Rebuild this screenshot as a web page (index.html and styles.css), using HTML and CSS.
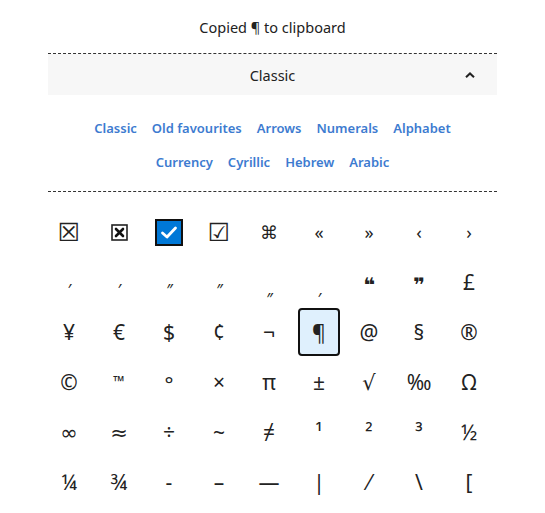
FILE: index.html
```html
<!DOCTYPE html>
<html lang="en">
<head>
<meta charset="utf-8">
<title>Symbols</title>
<link rel="stylesheet" href="styles.css">
</head>
<body>
<main class="page">
  <p class="status">Copied ¶ to clipboard</p>
  <hr class="divider">
  <div class="section-head">
    <span class="section-title">Classic</span>
    <svg class="chevron" width="10" height="6" viewBox="0 0 10 6"><path d="M1 5.2 L5 1.4 L9 5.2" fill="none" stroke="#222" stroke-width="2"/></svg>
  </div>
  <nav class="links">
    <a href="#">Classic</a>
    <a href="#">Old favourites</a>
    <a href="#">Arrows</a>
    <a href="#">Numerals</a>
    <a href="#">Alphabet</a>
    <a href="#">Currency</a>
    <a href="#">Cyrillic</a>
    <a href="#">Hebrew</a>
    <a href="#">Arabic</a>
  </nav>
  <hr class="divider">
  <div class="grid">
    <button class="cell"><span class="sym box">☒</span></button>
    <button class="cell"><svg class="boxicon" width="17" height="17" viewBox="0 0 17 17"><rect x="1" y="1" width="15" height="15" fill="#fff" stroke="#222" stroke-width="1.6"/><path d="M5 5 L12 12 M12 5 L5 12" stroke="#111" stroke-width="2.6" stroke-linecap="round"/></svg></button>
    <button class="cell"><svg class="emoji" width="28" height="27" viewBox="0 0 28 27"><rect x="1" y="1" width="26" height="25" fill="#0078d7" stroke="#111" stroke-width="2"/><path d="M7.5 14 L12 18 L20.5 9" fill="none" stroke="#fff" stroke-width="2.8" stroke-linecap="round" stroke-linejoin="round"/></svg></button>
    <button class="cell"><span class="sym box">☑</span></button>
    <button class="cell"><span class="sym small">⌘</span></button>
    <button class="cell"><span class="sym small">«</span></button>
    <button class="cell"><span class="sym small">»</span></button>
    <button class="cell"><span class="sym small">‹</span></button>
    <button class="cell"><span class="sym small">›</span></button>

    <button class="cell"><span class="sym tick">′</span></button>
    <button class="cell"><span class="sym tick">′</span></button>
    <button class="cell"><span class="sym tick">″</span></button>
    <button class="cell"><span class="sym tick">″</span></button>
    <button class="cell"><span class="sym tick low">″</span></button>
    <button class="cell"><span class="sym tick low">′</span></button>
    <button class="cell"><span class="sym orn">❝</span></button>
    <button class="cell"><span class="sym orn">❞</span></button>
    <button class="cell"><span class="sym">£</span></button>

    <button class="cell"><span class="sym">¥</span></button>
    <button class="cell"><span class="sym">€</span></button>
    <button class="cell"><span class="sym">$</span></button>
    <button class="cell"><span class="sym">¢</span></button>
    <button class="cell"><span class="sym">¬</span></button>
    <button class="cell selected"><span class="sym">¶</span></button>
    <button class="cell"><span class="sym">@</span></button>
    <button class="cell"><span class="sym">§</span></button>
    <button class="cell"><span class="sym">®</span></button>

    <button class="cell"><span class="sym">©</span></button>
    <button class="cell"><span class="sym tm">™</span></button>
    <button class="cell"><span class="sym deg">°</span></button>
    <button class="cell"><span class="sym">×</span></button>
    <button class="cell"><span class="sym">π</span></button>
    <button class="cell"><span class="sym">±</span></button>
    <button class="cell"><span class="sym">√</span></button>
    <button class="cell"><span class="sym">‰</span></button>
    <button class="cell"><span class="sym">Ω</span></button>

    <button class="cell"><span class="sym">∞</span></button>
    <button class="cell"><span class="sym">≈</span></button>
    <button class="cell"><span class="sym">÷</span></button>
    <button class="cell"><span class="sym">~</span></button>
    <button class="cell"><span class="sym">≠</span></button>
    <button class="cell"><span class="sym sup">¹</span></button>
    <button class="cell"><span class="sym sup">²</span></button>
    <button class="cell"><span class="sym sup">³</span></button>
    <button class="cell"><span class="sym">½</span></button>

    <button class="cell"><span class="sym">¼</span></button>
    <button class="cell"><span class="sym">¾</span></button>
    <button class="cell"><span class="sym">-</span></button>
    <button class="cell"><span class="sym">–</span></button>
    <button class="cell"><span class="sym">—</span></button>
    <button class="cell"><span class="sym">|</span></button>
    <button class="cell"><span class="sym">⁄</span></button>
    <button class="cell"><span class="sym">\</span></button>
    <button class="cell"><span class="sym">[</span></button>
  </div>
</main>
</body>
</html>
```

FILE: styles.css
```css
* { box-sizing: border-box; }

body {
  margin: 0;
  background: #fff;
  color: #222;
  font-family: "Noto Sans", "DejaVu Sans", sans-serif;
}

.page {
  width: 449px;
  margin-left: 48px;
}

.status {
  margin: 0;
  padding-top: 16px;
  height: 53px;
  text-align: center;
  font-size: 14.5px;
  line-height: 22px;
}

.divider {
  margin: 0;
  border: 0;
  border-top: 1px dashed #333;
}

.section-head {
  display: grid;
  grid-template-columns: 1fr auto 1fr;
  align-items: center;
  height: 41px;
  background: #f7f7f7;
  font-size: 14.5px;
}

.section-title {
  grid-column: 2;
}

.chevron {
  grid-column: 3;
  justify-self: end;
  margin-right: 22px;
}

.links {
  display: flex;
  flex-wrap: wrap;
  justify-content: center;
  column-gap: 15px;
  row-gap: 16px;
  padding: 24px 30px 20px;
}

.links a {
  color: #3d7bd0;
  text-decoration: none;
  font-weight: 600;
  font-size: 13px;
  line-height: 18px;
}

.grid {
  display: grid;
  grid-template-columns: repeat(9, 42px);
  grid-auto-rows: 48px;
  column-gap: 8px;
  row-gap: 2px;
  margin-top: 16px;
}

.cell {
  display: flex;
  align-items: center;
  justify-content: center;
  padding: 0;
  border: 2px solid transparent;
  border-radius: 4px;
  background: none;
  color: #222;
  font-family: "Noto Sans", "DejaVu Sans", sans-serif;
  cursor: pointer;
}

.cell.selected {
  border-color: #111;
  background: #dff0fd;
}

.sym {
  font-size: 21px;
  line-height: 1;
}

.sym.small { font-size: 18px; }
.sym.box { font-family: "DejaVu Sans", sans-serif; font-size: 25px; }
.sym.tick { font-size: 16px; font-style: italic; margin-top: 16px; }
.sym.tick.low { margin-top: 34px; }
.sym.orn { font-family: "DejaVu Sans", sans-serif; font-size: 20px; font-weight: bold; margin-top: 6px; }
.sym.tm { font-size: 15px; margin-top: -2px; }
.sym.deg { margin-top: 4px; }
.sym.sup { margin-top: 0; }
```
